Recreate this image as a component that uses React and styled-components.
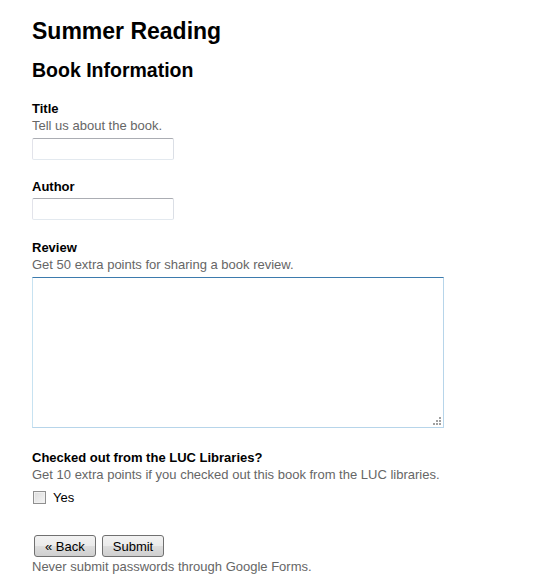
import React from 'react';
import styled, { createGlobalStyle } from 'styled-components';

const GlobalStyle = createGlobalStyle`
  body {
    margin: 0;
    background: #fff;
    font-family: "Liberation Sans", Arial, sans-serif;
    color: #000;
  }
`;

const Page = styled.div`
  padding: 17px 0 0 32px;
  width: 524px;
`;

const FormTitle = styled.h1`
  margin: 0;
  font-size: 23px;
  line-height: 28px;
  font-weight: bold;
`;

const PageTitle = styled.h2`
  margin: 13px 0 0;
  font-size: 19.5px;
  line-height: 24px;
  font-weight: bold;
`;

const Item = styled.div`
  margin-top: ${({ gap }) => gap}px;
  display: flex;
  flex-direction: column;
  align-items: flex-start;
`;

const Label = styled.label`
  font-size: 13px;
  line-height: 17px;
  font-weight: bold;
`;

const Help = styled.div`
  font-size: 13px;
  line-height: 17px;
  margin-bottom: 1px;
  color: #666;
`;

const TextInput = styled.input`
  box-sizing: border-box;
  width: 142px;
  height: 22px;
  margin-top: 3px;
  padding: 2px 3px;
  border: 1px solid;
  border-color: #abadb3 #dbdfe6 #e3e9ef #e2e3ea;
  border-radius: 2px;
  font-family: inherit;
  font-size: 13px;
  outline: none;
`;

const AreaWrap = styled.div`
  position: relative;
  margin-top: 3px;
  width: 412px;
  height: 151px;
`;

const TextArea = styled.textarea`
  box-sizing: border-box;
  display: block;
  width: 100%;
  height: 100%;
  padding: 2px;
  border: 1px solid;
  border-color: #3d7bad #b7d5ea #b7d5ea #c7e2f1;
  resize: none;
  font-family: inherit;
  font-size: 13px;
  outline: none;
`;

const Grip = styled.svg`
  position: absolute;
  right: 3px;
  bottom: 3px;
`;

const ChoiceRow = styled.label`
  display: flex;
  align-items: center;
  gap: 7px;
  margin-top: 5px;
  font-size: 13px;
  line-height: 17px;
`;

const Box = styled.input`
  appearance: none;
  box-sizing: border-box;
  width: 13px;
  height: 13px;
  margin: 0 0 0 1px;
  border: 1px solid #8f8f8f;
  background: linear-gradient(135deg, #dcdcdc 0%, #f4f4f4 100%);
  box-shadow: inset 0 0 0 1px #f0f0f0;
`;

const Actions = styled.div`
  margin-top: 29px;
  display: flex;
  gap: 6px;
  padding-left: 2px;
`;

const Button = styled.button`
  box-sizing: border-box;
  height: 22px;
  padding: 0 10px;
  border: 1px solid #707070;
  border-radius: 3px;
  background: linear-gradient(#f2f2f2 0%, #ebebeb 48%, #dddddd 52%, #cfcfcf 100%);
  font-family: inherit;
  font-size: 13px;
  color: #000;
`;

const Footer = styled.div`
  margin-top: 2px;
  font-size: 13px;
  line-height: 16px;
  color: #666;
`;

export default function App() {
  return (
    <Page>
      <GlobalStyle />
      <FormTitle>Summer Reading</FormTitle>
      <PageTitle>Book Information</PageTitle>

      <Item gap={18}>
        <Label htmlFor="title">Title</Label>
        <Help>Tell us about the book.</Help>
        <TextInput id="title" type="text" />
      </Item>

      <Item gap={18}>
        <Label htmlFor="author">Author</Label>
        <TextInput id="author" type="text" />
      </Item>

      <Item gap={19}>
        <Label htmlFor="review">Review</Label>
        <Help>Get 50 extra points for sharing a book review.</Help>
        <AreaWrap>
          <TextArea id="review" />
          <Grip width="8" height="8" viewBox="0 0 8 8">
            <g fill="#a0a0a0">
              <rect x="6" y="0" width="2" height="2" />
              <rect x="3" y="3" width="2" height="2" />
              <rect x="6" y="3" width="2" height="2" />
              <rect x="0" y="6" width="2" height="2" />
              <rect x="3" y="6" width="2" height="2" />
              <rect x="6" y="6" width="2" height="2" />
            </g>
          </Grip>
        </AreaWrap>
      </Item>

      <Item gap={21}>
        <Label>Checked out from the LUC Libraries?</Label>
        <Help>Get 10 extra points if you checked out this book from the LUC libraries.</Help>
        <ChoiceRow>
          <Box type="checkbox" />
          Yes
        </ChoiceRow>
      </Item>

      <Actions>
        <Button>« Back</Button>
        <Button>Submit</Button>
      </Actions>
      <Footer>Never submit passwords through Google Forms.</Footer>
    </Page>
  );
}
